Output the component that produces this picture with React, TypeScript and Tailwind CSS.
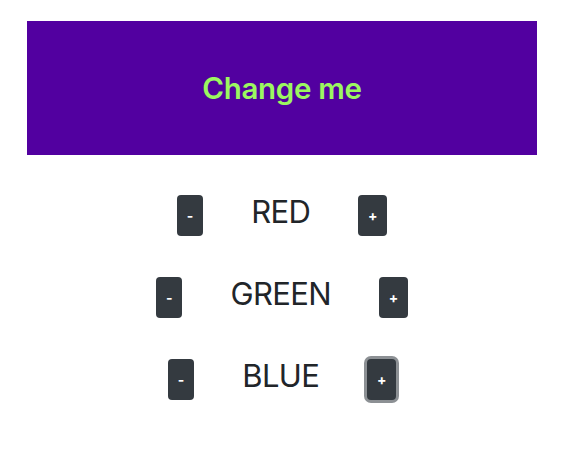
import { useState } from "react";

type Channel = "red" | "green" | "blue";

const rows: { key: Channel; label: string }[] = [
  { key: "red", label: "RED" },
  { key: "green", label: "GREEN" },
  { key: "blue", label: "BLUE" },
];

export default function App() {
  const [rgb, setRgb] = useState({ red: 82, green: 0, blue: 160 });

  const change = (key: Channel, delta: number) => {
    setRgb((c) => ({ ...c, [key]: Math.min(255, Math.max(0, c[key] + delta)) }));
  };

  return (
    <div className="min-h-[470px] bg-white pt-[21px] font-['Inter','Liberation_Sans',sans-serif] text-[#212529]">
      {/* Colour box */}
      <div
        className="mx-auto flex h-[134px] w-[510px] items-center justify-center"
        style={{ backgroundColor: `rgb(${rgb.red}, ${rgb.green}, ${rgb.blue})` }}
      >
        <h1 className="text-[29.5px] font-semibold tracking-[-0.01em] text-[#9cf760]">Change me</h1>
      </div>

      {/* Controls */}
      <div className="mt-[40px] flex flex-col gap-[41px]">
        {rows.map((row) => (
          <div key={row.key} className="flex items-start justify-center">
            <button
              onClick={() => change(row.key, -10)}
              className="flex h-[41px] w-[26.6px] items-center justify-center rounded-[4px] bg-[#343a40] text-[14px] font-bold text-white"
            >
              -
            </button>
            <h2 className="mx-12 text-[31px] leading-[34px] tracking-[-0.02em]">{row.label}</h2>
            <button
              onClick={() => change(row.key, 10)}
              className={
                row.key === "blue"
                  ? "flex h-[41px] w-[29px] items-center justify-center rounded-[4px] bg-[#343a40] text-[14px] font-bold text-white ring-[3px] ring-[#8c9094]"
                  : "flex h-[41px] w-[29px] items-center justify-center rounded-[4px] bg-[#343a40] text-[14px] font-bold text-white"
              }
            >
              +
            </button>
          </div>
        ))}
      </div>
    </div>
  );
}
